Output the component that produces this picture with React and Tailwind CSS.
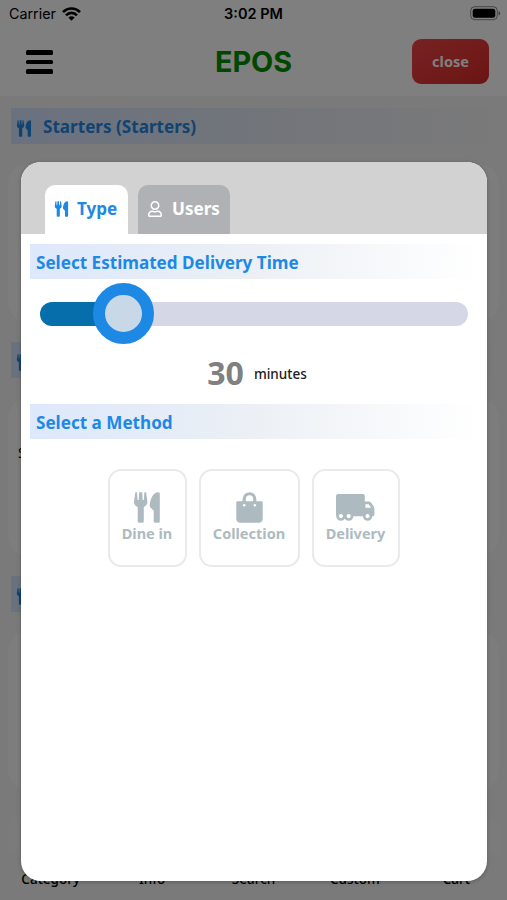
import React from "react";
import { FaRegUser } from "react-icons/fa";

function Utensils({ className }) {
  return (
    <svg className={className} viewBox="0 0 26 31" fill="currentColor">
      <path d="M1.3 0.3H3L3.6 8H4.7L5.2 0.3H8.2L8.7 8H9.8L10.4 0.3H12.1L13.4 9.5C13.6 12.2 12 14 9.8 15V29.2Q9.8 30.7 8.3 30.7H5.2Q3.7 30.7 3.7 29.2V15C1.3 14 -0.2 12.2 0 9.5Z" />
      <path d="M24.4 0.3Q25.8 0.3 25.8 1.7V29.2Q25.8 30.7 24.3 30.7H21.2Q19.7 30.7 19.7 29.2V18.8L16.2 15.2Q15.6 14.6 15.8 13.5C16.2 6.5 19.3 0.3 24.4 0.3Z" />
    </svg>
  );
}

function Bag({ className }) {
  return (
    <svg className={className} viewBox="0 0 27 31">
      <path d="M8.2 12V7.5C8.2 -0.2 18.8 -0.2 18.8 7.5V12" fill="none" stroke="currentColor" strokeWidth="3.2" />
      <path d="M1.5 9.3H25.5Q26.7 9.3 26.7 10.5V26.5Q26.7 30.7 22.5 30.7H4.5Q0.3 30.7 0.3 26.5V10.5Q0.3 9.3 1.5 9.3Z" fill="currentColor" />
      <circle cx="8.2" cy="13.2" r="1.3" fill="white" />
      <circle cx="18.8" cy="13.2" r="1.3" fill="white" />
    </svg>
  );
}

function Truck({ className }) {
  return (
    <svg className={className} viewBox="0 0 39 27" fill="currentColor">
      <path d="M2 0H27Q28.8 0 28.8 1.8V7.6H32.5Q34 7.6 35.2 8.8L37.6 12.2Q38.4 13.3 38.4 14.7V20.5Q38.4 22.3 36.6 22.3H1.8Q0 22.3 0 20.5V2Q0 0 2 0Z" />
      <path d="M29.3 10.2H32.6L35.1 13.8H29.3Z" fill="white" />
      <g stroke="currentColor" strokeWidth="2.6" fill="white">
        <circle cx="4.9" cy="22.1" r="3.4" />
        <circle cx="12.7" cy="22.1" r="3.4" />
        <circle cx="31.6" cy="22.1" r="3.4" />
      </g>
    </svg>
  );
}

function StatusBar() {
  return (
    <div className="relative flex h-[27px] items-center justify-between pl-[9px] pr-[6px] font-['Inter',sans-serif]">
      <div className="flex items-center gap-[6px] text-[14.3px]">
        <span>Carrier</span>
        <svg width="19" height="14" viewBox="0 0 19 14" fill="none" stroke="black" strokeWidth="2.6">
          <path d="M1 5.2C5.8 0.2 13.2 0.2 18 5.2" />
          <path d="M4 8.3C7.2 5 11.8 5 15 8.3" />
          <path d="M6.4 10.6C8.3 8.8 10.7 8.8 12.6 10.6L9.5 13.7Z" fill="black" stroke="none" />
        </svg>
      </div>
      <span className="absolute left-1/2 -translate-x-1/2 text-[14.5px] font-semibold whitespace-nowrap">3:02 PM</span>
      <svg width="31" height="15" viewBox="0 0 31 15">
        <rect x="0.7" y="0.7" width="26.6" height="13" rx="4" fill="none" stroke="#000" strokeOpacity="0.45" />
        <rect x="2.7" y="2.7" width="22.6" height="9" rx="2.2" fill="#000" />
        <path d="M28.6 5V9.6C30.8 8.6 30.8 6 28.6 5Z" fill="#000" fillOpacity="0.5" />
      </svg>
    </div>
  );
}

function Header() {
  return (
    <header className="relative flex h-[69px] items-center justify-between pl-[26px] pr-[18px]">
      <div className="flex w-[27px] flex-col gap-[5px]">
        <div className="h-[5px] rounded-[1.5px] bg-black" />
        <div className="h-[4px] rounded-[1.5px] bg-black" />
        <div className="h-[5px] rounded-[1.5px] bg-black" />
      </div>
      <h1 className="absolute left-1/2 -translate-x-1/2 font-['Inter',sans-serif] text-[28.8px] font-bold text-[#009000]">EPOS</h1>
      <button className="h-[45px] w-[77px] rounded-[9px] bg-gradient-to-br from-[#f04646] to-[#d62828] text-[14.5px] font-bold text-white">close</button>
    </header>
  );
}

function MenuSection({ title, note }) {
  return (
    <section className="h-[234px] shrink-0 px-[8px]">
      <div className="ml-[3px] flex h-9 items-center gap-[11px] bg-gradient-to-r from-[#d5e4ff] via-[#e4eaf5] to-[#f4f4f4] pl-[5px] text-[17.1px] font-bold text-[#1e88e5]">
        <Utensils className="mt-1 h-[17px] w-4" />
        <span className="pt-[1px]">{title}</span>
      </div>
      <div className="mt-5 flex h-[158px] items-center rounded-[20px] bg-[#fafafa] px-[10px] pb-[50px] text-[14px]">{note}</div>
    </section>
  );
}

function Tabs() {
  return (
    <div className="flex h-[72px] items-end gap-[10px] bg-[#d2d2d2] pl-[24px] text-[17.1px] font-bold">
      <div className="flex h-[49px] w-[83px] items-center gap-[8px] rounded-t-[10px] bg-white pb-[2px] pl-[9px] text-[#1e88e5]">
        <Utensils className="mt-px h-4 w-[15px] shrink-0" />
        <span>Type</span>
      </div>
      <div className="flex h-[49px] w-[92px] items-center gap-[9px] rounded-t-[10px] bg-[#afb1b4] pb-[2px] pl-[9px] text-white">
        <FaRegUser className="mt-px size-4 shrink-0" />
        <span>Users</span>
      </div>
    </div>
  );
}

function SectionTitle({ children }) {
  return (
    <h2 className="mx-[9px] flex h-[35px] items-center bg-gradient-to-r from-[#dde8fb] via-[#ecf0f5] to-white pt-[2px] pl-[6px] text-[17.1px] font-bold text-[#1e88e5]">
      {children}
    </h2>
  );
}

function Method({ icon: Icon, label, width, iconSize }) {
  return (
    <button className={`flex h-[98px] flex-col items-center rounded-[13px] border-2 border-[#e8eaeb] pt-[17px] text-[#adbbc1] ${width}`}>
      <div className="flex h-[39px] items-center justify-center">
        <Icon className={iconSize} />
      </div>
      <span className="-mt-[4px] text-[14.5px] leading-5 font-bold whitespace-nowrap">{label}</span>
    </button>
  );
}

function Modal() {
  return (
    <div className="absolute top-[162px] left-[21px] h-[719px] w-[466px] overflow-hidden rounded-[20px] bg-white shadow-[0_1px_4px_rgba(0,0,0,0.25)]">
      <Tabs />
      <div className="pt-[10px]">
        <SectionTitle>Select Estimated Delivery Time</SectionTitle>
        <div className="mt-[4px] ml-[19px] flex h-[61px] w-[428px] items-center">
          <div className="h-[24px] w-[60px] rounded-l-full bg-[#066fab]" />
          <div className="z-10 -ml-[7px] size-[61px] shrink-0 rounded-full border-[12px] border-[#1e88e5] bg-[#c9d8e6]" />
          <div className="-ml-[7px] h-[24px] flex-1 rounded-r-full bg-[#d5d7e6]" />
        </div>
        <div className="flex h-[60px] items-center justify-center gap-[10px] pb-[2px] pl-[6px]">
          <span className="text-[32px] leading-none font-bold text-[#808080]">30</span>
          <span className="pt-[2px] text-[13.5px] font-medium text-[#202020]">minutes</span>
        </div>
        <SectionTitle>Select a Method</SectionTitle>
        <div className="mt-[30px] flex justify-center gap-[12px] pr-px">
          <Method icon={Utensils} label="Dine in" width="w-[79px]" iconSize="h-[31px] w-[26px]" />
          <Method icon={Bag} label="Collection" width="w-[101px]" iconSize="h-[31px] w-[27px]" />
          <Method icon={Truck} label="Delivery" width="w-[88px]" iconSize="h-[27px] w-[39px]" />
        </div>
      </div>
    </div>
  );
}

export default function App() {
  return (
    <div className="relative flex h-[900px] w-[507px] flex-col overflow-hidden bg-white font-['Noto_Sans','Open_Sans',sans-serif] text-black">
      <StatusBar />
      <Header />
      <main className="flex h-[768px] flex-col overflow-hidden bg-[#f4f4f4] pt-[12px]">
        <MenuSection title="Starters (Starters)" />
        <MenuSection title="" note="S" />
        <MenuSection title="" />
        <div className="mx-2 mt-1 h-10 shrink-0 rounded-t-[20px] bg-[#f7f7f7]" />
      </main>
      <nav className="flex flex-1 bg-[#f4f4f4] text-center text-[13.5px] leading-5 font-medium">
        {["Category", "Info", "Search", "Custom", "Cart"].map((item) => (
          <span key={item} className="flex-1 pt-[5px]">{item}</span>
        ))}
      </nav>
      <div className="absolute inset-0 bg-black/50" />
      <Modal />
    </div>
  );
}
